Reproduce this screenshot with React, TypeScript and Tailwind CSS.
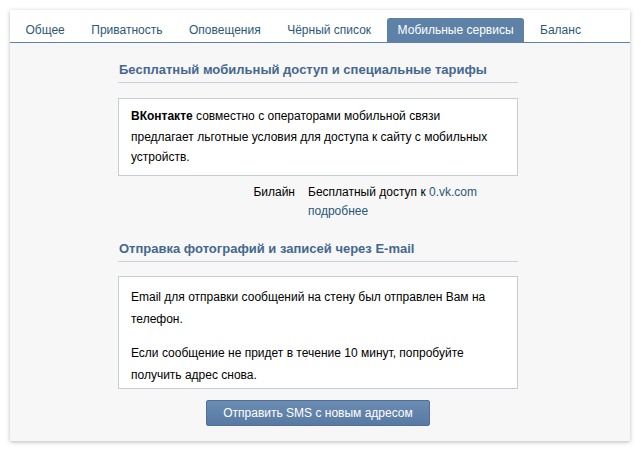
import React from "react";

const tabs = ["Общее", "Приватность", "Оповещения", "Чёрный список", "Мобильные сервисы", "Баланс"];

export default function App() {
  return (
    <div className="w-[641px] h-[451px] bg-white pt-[10px] pl-[10px]" style={{ fontFamily: '"Liberation Sans", Arial, sans-serif' }}>
      <div className="w-[620px] h-[431px] bg-[#f7f7f7] shadow-[0_1px_4px_rgba(0,0,0,0.28)] flex flex-col">
        <div className="h-[33px] bg-white border-b border-[#5e81a8] flex items-end pl-[5px] gap-[5.5px]">
          {tabs.map((t, i) => (
            <div
              key={t}
              className={
                i === 4
                  ? "h-[24px] px-[10.5px] bg-[#5e81a8] text-white rounded-t-[3px] text-[12px] leading-[24px]"
                  : "h-[24px] px-[10.5px] text-[#2b587a] text-[12px] leading-[24px]"
              }
            >
              {t}
            </div>
          ))}
        </div>
        <div className="ml-[108px] w-[400px] flex flex-col text-[12px] text-[#000]">
          <div className="mt-[18px] pl-[1px] pb-[3px] border-b border-[#c9d2dc] text-[13px] leading-[18px] font-bold text-[#45688e]">
            Бесплатный мобильный доступ и специальные тарифы
          </div>
          <div className="mt-[15px] bg-white border border-[#c5ccd6] px-[12px] pt-[7px] pb-[7px] leading-[20.5px]">
            <b>ВКонтакте</b> совместно с операторами мобильной связи предлагает льготные условия для доступа к сайту с мобильных устройств.
          </div>
          <div className="mt-[7px] flex leading-[19px]">
            <div className="w-[177px] text-right">Билайн</div>
            <div className="ml-[13px]">
              <div>
                Бесплатный доступ к <span className="text-[#2b587a]">0.vk.com</span>
              </div>
              <div className="text-[#2b587a]">подробнее</div>
            </div>
          </div>
          <div className="mt-[19px] pl-[1px] pb-[3px] border-b border-[#c9d2dc] text-[13px] leading-[18px] font-bold text-[#45688e]">
            Отправка фотографий и записей через E-mail
          </div>
          <div className="mt-[14px] bg-white border border-[#c5ccd6] px-[12px] pt-[9px] pb-[2px] leading-[22px]">
            <p>Email для отправки сообщений на стену был отправлен Вам на телефон.</p>
            <p className="mt-[12px]">Если сообщение не придет в течение 10 минут, попробуйте получить адрес снова.</p>
          </div>
          <div className="mt-[11px] flex justify-center">
            <button className="w-[224px] h-[26px] bg-gradient-to-b from-[#6b8db4] to-[#587aa2] border border-[#4f709a] rounded-[2px] text-white text-[12px] leading-[24px] text-center">
              Отправить SMS с новым адресом
            </button>
          </div>
        </div>
      </div>
    </div>
  );
}
